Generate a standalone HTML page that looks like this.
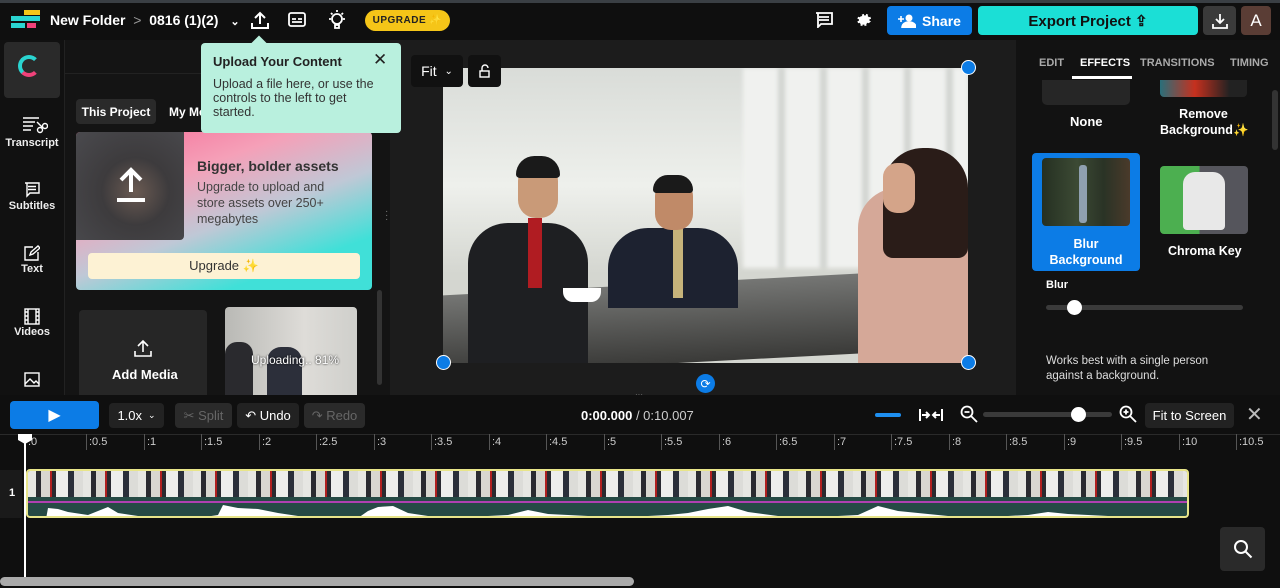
<!DOCTYPE html>
<html><head><meta charset="utf-8"><style>
*{box-sizing:border-box;margin:0;padding:0}
body{width:1280px;height:588px;overflow:hidden;background:#0f0f0f;font-family:"Liberation Sans",sans-serif;color:#fff;position:relative}
.a{position:absolute}
.btn{position:absolute;border-radius:4px;display:flex;align-items:center;justify-content:center;font-size:13px}
.side{position:absolute;left:0;width:64px;text-align:center;font-size:11px;font-weight:bold;color:#eee}
.tick{position:absolute;top:434px;height:16px;border-left:1px solid #555;font-size:11px;color:#ccc;padding-left:2px;line-height:16px}
</style></head><body>
<div class="a" style="left:0;top:0;width:1280px;height:3px;background:#3a3f44"></div>
<!-- top bar -->
<div class="a" style="left:24px;top:10px;width:16px;height:5px;background:#f5c518"></div>
<div class="a" style="left:11px;top:16px;width:29px;height:5px;background:#2ad4d0"></div>
<div class="a" style="left:11px;top:23px;width:14px;height:5px;background:#2ad4d0"></div>
<div class="a" style="left:27px;top:23px;width:9px;height:5px;background:#f0427a"></div>
<div class="a" style="left:50px;top:12px;font-size:14px;font-weight:bold">New Folder <span style="color:#999;font-weight:normal">&nbsp;&gt;&nbsp;</span> 0816 (1)(2) <span style="font-size:11px;margin-left:8px">&#8964;</span></div>
<svg class="a" style="left:250px;top:10px" width="20" height="20" viewBox="0 0 20 20" fill="none" stroke="#fff" stroke-width="2"><path d="M10 14V3M5 8l5-5 5 5M2 13v5h16v-5"/></svg>
<svg class="a" style="left:288px;top:12px" width="18" height="16" viewBox="0 0 18 16" fill="none" stroke="#fff" stroke-width="1.8"><rect x="1" y="1" width="16" height="13" rx="2"/><path d="M4 7h4M10 7h4M4 10h10"/></svg>
<svg class="a" style="left:327px;top:9px" width="20" height="22" viewBox="0 0 20 22" fill="none" stroke="#fff" stroke-width="1.8"><circle cx="10" cy="10" r="5"/><path d="M8 16h4v3H8zM10 1v2M2 10h2M16 10h2M4 4l1.5 1.5M16 4l-1.5 1.5"/></svg>
<div class="btn" style="left:365px;top:10px;width:85px;height:21px;border-radius:11px;background:#f5c518;color:#222;font-size:10px;font-weight:bold;letter-spacing:.5px">UPGRADE ✨</div>
<svg class="a" style="left:815px;top:12px" width="18" height="16" viewBox="0 0 18 16" fill="none" stroke="#fff" stroke-width="1.8"><path d="M1 1h16v11H6l-3 3V1z"/><path d="M4 5h10M4 8h10"/></svg>
<svg class="a" style="left:855px;top:11px" width="18" height="18" viewBox="0 0 24 24" fill="#fff"><path d="M12 8a4 4 0 100 8 4 4 0 000-8zm9.4 5.5l-2-.3a7 7 0 010-2.4l2-.3-.9-2.8-1.9.7a7 7 0 00-1.7-1.7l.7-1.9-2.8-.9-.3 2a7 7 0 00-2.4 0l-.3-2-2.8.9.7 1.9A7 7 0 006 8.4l-1.9-.7-.9 2.8 2 .3a7 7 0 000 2.4l-2 .3.9 2.8 1.9-.7a7 7 0 001.7 1.7l-.7 1.9 2.8.9.3-2a7 7 0 002.4 0l.3 2 2.8-.9-.7-1.9a7 7 0 001.7-1.7l1.9.7z"/></svg>
<div class="btn" style="left:887px;top:6px;width:85px;height:29px;background:#0c7ce6;font-size:14px;font-weight:bold"><svg width="18" height="14" viewBox="0 0 18 14" fill="#fff" style="margin-right:6px"><circle cx="11" cy="4" r="3.5"/><path d="M4 14c0-4 3-6 7-6s7 2 7 6zM0 5h6M3 2v6" stroke="#fff" stroke-width="1.6"/></svg>Share</div>
<div class="btn" style="left:978px;top:6px;width:220px;height:29px;background:#1bdfd6;color:#111;font-size:15px;font-weight:bold">Export Project ⇪</div>
<div class="btn" style="left:1203px;top:6px;width:33px;height:29px;background:#3a3a3a"><svg width="16" height="16" viewBox="0 0 16 16" fill="none" stroke="#fff" stroke-width="1.8"><path d="M8 1v9M4 6l4 4 4-4M1 11v4h14v-4"/></svg></div>
<div class="btn" style="left:1241px;top:6px;width:30px;height:29px;background:#5a3d35;font-size:17px">A</div>

<!-- left sidebar -->
<div class="a" style="left:0;top:40px;width:64px;height:355px;background:#111"></div>
<div class="a" style="left:4px;top:42px;width:56px;height:56px;border-radius:4px;background:#2a2a2a"></div>
<div class="a" style="left:18px;top:55px;width:22px;height:22px;border-radius:50%;border:4px solid #2ad4d0;border-right-color:transparent;border-bottom-color:#f0427a"></div>
<svg class="a" style="left:22px;top:116px" width="26" height="18" viewBox="0 0 26 18" fill="none" stroke="#fff" stroke-width="1.4"><path d="M1 2h16M1 6h12M1 10h10M1 14h8"/><circle cx="18" cy="14" r="2.5"/><circle cx="23" cy="10" r="2.5"/><path d="M15 6l6 6"/></svg>
<div class="side" style="top:137px">Transcript</div>
<svg class="a" style="left:24px;top:182px" width="16" height="16" viewBox="0 0 16 16" fill="none" stroke="#fff" stroke-width="1.4"><path d="M1 1h14v10H6l-3 3V1zM4 4.5h8M4 7.5h8"/></svg>
<div class="side" style="top:200px">Subtitles</div>
<svg class="a" style="left:24px;top:245px" width="16" height="16" viewBox="0 0 16 16" fill="none" stroke="#fff" stroke-width="1.4"><path d="M9 2H1v13h13V7M6 10l1-3 7-6 2 2-7 6z"/></svg>
<div class="side" style="top:263px">Text</div>
<svg class="a" style="left:24px;top:308px" width="16" height="17" viewBox="0 0 16 17" fill="none" stroke="#fff" stroke-width="1.4"><rect x="1" y="1" width="14" height="15"/><path d="M4 1v15M12 1v15M1 4h3M1 8h3M1 12h3M12 4h3M12 8h3M12 12h3"/></svg>
<div class="side" style="top:326px">Videos</div>
<svg class="a" style="left:24px;top:372px" width="16" height="15" viewBox="0 0 16 15" fill="none" stroke="#fff" stroke-width="1.4"><rect x="1" y="1" width="14" height="13"/><path d="M1 12l5-5 4 4 2-2 3 3"/></svg>
<!-- media panel -->
<div class="a" style="left:64px;top:40px;width:326px;height:355px;background:#141414;border-left:1px solid #222"></div>
<div class="a" style="left:64px;top:73px;width:326px;height:1px;background:#222"></div>
<div class="btn" style="left:76px;top:99px;width:80px;height:25px;background:#2a2a2a;font-size:12px;font-weight:bold">This Project</div>
<div class="a" style="left:169px;top:105px;font-size:12px;font-weight:bold">My Me</div>
<div class="a" style="left:76px;top:132px;width:296px;height:158px;border-radius:4px;background:linear-gradient(160deg,#f66a95 0%,#f5a0b8 30%,#bfc8d6 55%,#40e0d8 80%,#40e0d8 100%)"></div>
<div class="a" style="left:76px;top:132px;width:108px;height:108px;border-radius:4px 0 4px 0;background:radial-gradient(circle at 55% 55%,#6a5a52 0,#3d3b3d 40%,#4a4a4e 100%)"></div>
<svg class="a" style="left:115px;top:166px" width="32" height="36" viewBox="0 0 32 36" fill="none" stroke="#fff" stroke-width="4"><path d="M16 26V4M6 14L16 4l10 10M2 34h28"/></svg>
<div class="a" style="left:197px;top:158px;font-size:14px;font-weight:bold;color:#333">Bigger, bolder assets</div>
<div class="a" style="left:197px;top:179px;font-size:12.5px;line-height:16px;color:#444;width:140px">Upgrade to upload and store assets over 250+ megabytes</div>
<div class="btn" style="left:88px;top:253px;width:272px;height:26px;background:#fdf2d4;color:#333;font-size:13px">Upgrade ✨</div>
<div class="a" style="left:79px;top:310px;width:128px;height:85px;border-radius:4px 4px 0 0;background:#262626"></div>
<svg class="a" style="left:133px;top:338px" width="20" height="20" viewBox="0 0 20 20" fill="none" stroke="#fff" stroke-width="1.6"><path d="M10 14V3M5 8l5-5 5 5M2 13v5h16v-5"/></svg>
<div class="a" style="left:112px;top:367px;font-size:13px;font-weight:bold">Add Media</div>
<div class="a" style="left:225px;top:307px;width:132px;height:88px;border-radius:4px 4px 0 0;overflow:hidden;background:linear-gradient(90deg,#b9b9b5,#dedcd8 60%,#cfcfcb)">
 <div class="a" style="left:0;top:35px;width:28px;height:55px;background:#2a2a2e;border-radius:12px 12px 0 0"></div>
 <div class="a" style="left:42px;top:40px;width:35px;height:50px;background:#2c2f3a;border-radius:14px 14px 0 0"></div>
</div>
<div class="a" style="left:251px;top:353px;font-size:12px;color:#fff;text-shadow:0 0 2px #000">Uploading.. 81%</div>
<div class="a" style="left:377px;top:290px;width:5px;height:95px;border-radius:3px;background:#333"></div>
<div class="a" style="left:385px;top:210px;font-size:10px;color:#777;line-height:4px">·<br>·<br>·</div>

<!-- preview area -->
<div class="a" style="left:390px;top:40px;width:626px;height:355px;background:#1c1c1c"></div>
<div class="a" style="left:443px;top:68px;width:525px;height:295px;overflow:hidden;background:linear-gradient(180deg,#d9dcd8 0%,#eef0ec 40%,#d4d6d0 70%)">
 <div class="a" style="left:300px;top:0;width:225px;height:200px;background:repeating-linear-gradient(90deg,#f0f1ef 0 35px,#d2d5d1 35px 42px);filter:blur(2px)"></div>
 <div class="a" style="left:0;top:215px;width:470px;height:80px;background:linear-gradient(180deg,#757674,#3a3a38);transform:skewY(-3deg)"></div>
 <div class="a" style="left:25px;top:155px;width:120px;height:140px;background:#1e1f22;border-radius:40px 40px 0 0"></div>
 <div class="a" style="left:85px;top:150px;width:14px;height:70px;background:#b01c22"></div>
 <div class="a" style="left:75px;top:95px;width:40px;height:55px;background:#c99a78;border-radius:18px"></div>
 <div class="a" style="left:73px;top:88px;width:44px;height:22px;background:#1a1a1a;border-radius:20px 20px 4px 4px"></div>
 <div class="a" style="left:165px;top:160px;width:130px;height:80px;background:#1d2230;border-radius:40px 40px 0 0"></div>
 <div class="a" style="left:230px;top:160px;width:10px;height:70px;background:#c6b37a"></div>
 <div class="a" style="left:212px;top:112px;width:38px;height:50px;background:#c08a68;border-radius:16px"></div>
 <div class="a" style="left:210px;top:107px;width:40px;height:18px;background:#1a1a1a;border-radius:18px 18px 4px 4px"></div>
 <div class="a" style="left:120px;top:220px;width:38px;height:14px;background:#fff;border-radius:0 0 10px 10px"></div>
 <div class="a" style="left:415px;top:120px;width:110px;height:175px;background:#d5a898;border-radius:40px 20px 0 0"></div>
 <div class="a" style="left:440px;top:80px;width:85px;height:110px;background:#2a1c18;border-radius:40px 40px 10px 10px"></div>
 <div class="a" style="left:440px;top:95px;width:32px;height:50px;background:#d4a489;border-radius:14px"></div>
</div>
<div class="btn" style="left:411px;top:55px;width:52px;height:32px;background:#111;font-size:14px">Fit &nbsp;<span style="font-size:10px">&#8964;</span></div>
<div class="btn" style="left:468px;top:55px;width:33px;height:32px;background:#111"><svg width="14" height="14" viewBox="0 0 14 14" fill="none" stroke="#fff" stroke-width="1.4"><rect x="2" y="7" width="9" height="6"/><path d="M4 7V4a3 3 0 016 0"/></svg></div>
<div class="a" style="left:961px;top:60px;width:15px;height:15px;border-radius:50%;background:#0c7ce6;border:1px solid #fff"></div>
<div class="a" style="left:436px;top:355px;width:15px;height:15px;border-radius:50%;background:#0c7ce6;border:1px solid #fff"></div>
<div class="a" style="left:961px;top:355px;width:15px;height:15px;border-radius:50%;background:#0c7ce6;border:1px solid #fff"></div>
<div class="btn" style="left:696px;top:374px;width:19px;height:19px;border-radius:50%;background:#0c7ce6;font-size:12px">⟳</div>
<div class="a" style="left:635px;top:390px;font-size:8px;color:#777">···</div>

<!-- tooltip -->
<div class="a" style="left:253px;top:38px;width:12px;height:12px;background:#b9f0de;transform:rotate(45deg)"></div>
<div class="a" style="left:201px;top:43px;width:200px;height:90px;border-radius:4px;background:#b9f0de;color:#222;padding:11px 12px">
 <div style="font-size:13px;font-weight:bold">Upload Your Content</div>
 <div style="font-size:12.5px;line-height:14px;margin-top:8px;color:#333">Upload a file here, or use the controls to the left to get started.</div>
</div>
<div class="a" style="left:373px;top:50px;font-size:17px;color:#222">✕</div>

<!-- right panel -->
<div class="a" style="left:1016px;top:40px;width:264px;height:355px;background:#121212"></div>
<div class="a" style="left:1039px;top:57px;font-size:11px;font-weight:bold;color:#aaa">EDIT</div>
<div class="a" style="left:1080px;top:57px;font-size:11px;font-weight:bold;color:#fff">EFFECTS</div>
<div class="a" style="left:1072px;top:76px;width:60px;height:3px;background:#fff"></div>
<div class="a" style="left:1140px;top:57px;font-size:11px;font-weight:bold;color:#aaa">TRANSITIONS</div>
<div class="a" style="left:1230px;top:57px;font-size:11px;font-weight:bold;color:#aaa">TIMING</div>
<div class="a" style="left:1042px;top:80px;width:88px;height:25px;border-radius:0 0 5px 5px;background:#262626"></div>
<div class="a" style="left:1160px;top:80px;width:87px;height:17px;border-radius:0 0 4px 4px;background:linear-gradient(90deg,#2a6f7a,#c5301e 40%,#222 80%)"></div>
<div class="a" style="left:1070px;top:114px;font-size:13px;font-weight:bold">None</div>
<div class="a" style="left:1160px;top:106px;width:87px;text-align:center;font-size:12.5px;font-weight:bold;line-height:16px">Remove Background<span style="color:#f5c518">✨</span></div>
<div class="a" style="left:1032px;top:153px;width:108px;height:118px;border-radius:4px;background:#0c7ce6"></div>
<div class="a" style="left:1042px;top:158px;width:88px;height:68px;border-radius:4px;background:linear-gradient(90deg,#253022,#3c4a34 40%,#2a3326 70%,#4a3a2a)"></div>
<div class="a" style="left:1079px;top:165px;width:8px;height:58px;background:#8fa0b0;border-radius:3px"></div>
<div class="a" style="left:1032px;top:236px;width:108px;text-align:center;font-size:12.5px;font-weight:bold;line-height:16px">Blur<br>Background</div>
<div class="a" style="left:1160px;top:166px;width:88px;height:68px;border-radius:4px;background:linear-gradient(90deg,#4caf50 0 45%,#55555c 45%)"></div>
<div class="a" style="left:1183px;top:172px;width:42px;height:58px;border-radius:12px 12px 4px 4px;background:#e8e8e8"></div>
<div class="a" style="left:1168px;top:244px;font-size:12.5px;font-weight:bold">Chroma Key</div>
<div class="a" style="left:1046px;top:279px;font-size:11px;font-weight:bold">Blur</div>
<div class="a" style="left:1046px;top:305px;width:197px;height:5px;border-radius:3px;background:#3a3a3a"></div>
<div class="a" style="left:1067px;top:300px;width:15px;height:15px;border-radius:50%;background:#fff"></div>
<div class="a" style="left:1046px;top:354px;font-size:11.5px;line-height:15px;color:#ddd">Works best with a single person<br>against a background.</div>
<div class="a" style="left:1272px;top:90px;width:6px;height:60px;border-radius:3px;background:#333"></div>

<!-- timeline toolbar -->
<div class="a" style="left:0;top:395px;width:1280px;height:193px;background:#0f0f0f"></div>
<div class="btn" style="left:10px;top:401px;width:89px;height:28px;background:#0c7ce6;font-size:16px">▶</div>
<div class="btn" style="left:109px;top:403px;width:55px;height:25px;background:#222;font-size:13px">1.0x <span style="font-size:9px;margin-left:6px">&#8964;</span></div>
<div class="btn" style="left:175px;top:403px;width:57px;height:25px;background:#2a2a2a;color:#666">✂ Split</div>
<div class="btn" style="left:237px;top:403px;width:62px;height:25px;background:#222;color:#fff">↶ Undo</div>
<div class="btn" style="left:304px;top:403px;width:61px;height:25px;background:#2a2a2a;color:#666">↷ Redo</div>
<div class="a" style="left:581px;top:408px;font-size:13px"><b>0:00.000</b> <span style="color:#ccc">/ 0:10.007</span></div>
<div class="a" style="left:875px;top:413px;width:26px;height:4px;background:#1e8ff0;border-radius:2px"></div>
<svg class="a" style="left:918px;top:407px" width="26" height="16" viewBox="0 0 26 16" fill="none" stroke="#fff" stroke-width="2"><path d="M2 2v12M24 2v12M4 8h7M8 5l3 3-3 3M22 8h-7M18 5l-3 3 3 3"/></svg>
<svg class="a" style="left:960px;top:405px" width="18" height="18" viewBox="0 0 18 18" fill="none" stroke="#fff" stroke-width="1.8"><circle cx="7" cy="7" r="5.5"/><path d="M11 11l6 6M4.5 7h5"/></svg>
<div class="a" style="left:983px;top:412px;width:129px;height:5px;border-radius:3px;background:#3a3a3a"></div>
<div class="a" style="left:1071px;top:407px;width:15px;height:15px;border-radius:50%;background:#fff"></div>
<svg class="a" style="left:1119px;top:405px" width="18" height="18" viewBox="0 0 18 18" fill="none" stroke="#fff" stroke-width="1.8"><circle cx="7" cy="7" r="5.5"/><path d="M11 11l6 6M4.5 7h5M7 4.5v5"/></svg>
<div class="btn" style="left:1145px;top:403px;width:89px;height:25px;background:#222;font-size:13px">Fit to Screen</div>
<div class="a" style="left:1246px;top:402px;font-size:20px;color:#bbb">✕</div>
<div class="a" style="left:0;top:434px;width:1280px;height:1px;background:#2a2a2a"></div>
<!-- ruler -->
<div class="tick" style="left:26px;border:none">:0</div>
<div class="tick" style="left:86px">:0.5</div><div class="tick" style="left:144px">:1</div><div class="tick" style="left:201px">:1.5</div><div class="tick" style="left:259px">:2</div><div class="tick" style="left:316px">:2.5</div><div class="tick" style="left:374px">:3</div><div class="tick" style="left:431px">:3.5</div><div class="tick" style="left:489px">:4</div><div class="tick" style="left:546px">:4.5</div><div class="tick" style="left:604px">:5</div><div class="tick" style="left:661px">:5.5</div><div class="tick" style="left:719px">:6</div><div class="tick" style="left:776px">:6.5</div><div class="tick" style="left:834px">:7</div><div class="tick" style="left:891px">:7.5</div><div class="tick" style="left:949px">:8</div><div class="tick" style="left:1006px">:8.5</div><div class="tick" style="left:1064px">:9</div><div class="tick" style="left:1121px">:9.5</div><div class="tick" style="left:1179px">:10</div><div class="tick" style="left:1236px">:10.5</div>
<div class="a" style="left:0;top:470px;width:22px;height:48px;background:#1a1a1a"></div>
<div class="a" style="left:9px;top:487px;font-size:11px;font-weight:bold">1</div>
<!-- clip -->
<div class="a" style="left:26px;top:469px;width:1163px;height:49px;border:2px solid #e8e58a;border-radius:4px;overflow:hidden;background:#264a45">
 <div style="height:26px;background:repeating-linear-gradient(90deg,#e6e6e2 0 8px,#2a2a30 8px 13px,#d8d6d0 13px 22px,#b02020 22px 24px,#2a2a30 24px 28px,#eeeeec 28px 40px,#2a2f3a 40px 46px,#dcdcd8 46px 55px)"></div>
 <div style="height:2px;background:#b040b0;margin-top:4px"></div>
 <svg width="1163" height="16" viewBox="0 0 1163 16" preserveAspectRatio="none" style="display:block"><path fill="#fff" d="M0 16L18 16 20 5 30 6 40 9 60 12 70 8 80 4 90 10 110 13 130 14 170 15 190 12 195 2 210 5 230 6 250 10 270 13 300 14 330 15 340 8 350 4 365 3 380 10 400 13 440 14 480 12 500 7 520 11 560 13 600 14 640 12 660 10 680 6 700 3 720 9 750 13 790 14 830 12 850 3 870 8 900 11 920 13 960 14 1000 12 1020 9 1040 11 1080 13 1110 14 1163 15 1163 16Z"/></svg>
</div>
<!-- playhead -->
<div class="a" style="left:24px;top:440px;width:2px;height:138px;background:#fff"></div>
<div class="a" style="left:18px;top:434px;width:14px;height:10px;background:#fff;clip-path:polygon(0 0,100% 0,100% 60%,50% 100%,0 60%)"></div>
<div class="btn" style="left:1220px;top:527px;width:45px;height:44px;background:#2a2a2a"><svg width="20" height="20" viewBox="0 0 20 20" fill="none" stroke="#fff" stroke-width="2"><circle cx="8" cy="8" r="6"/><path d="M12.5 12.5l6 6"/></svg></div>
<div class="a" style="left:0;top:577px;width:634px;height:9px;border-radius:5px;background:#aaa"></div>
</body></html>
